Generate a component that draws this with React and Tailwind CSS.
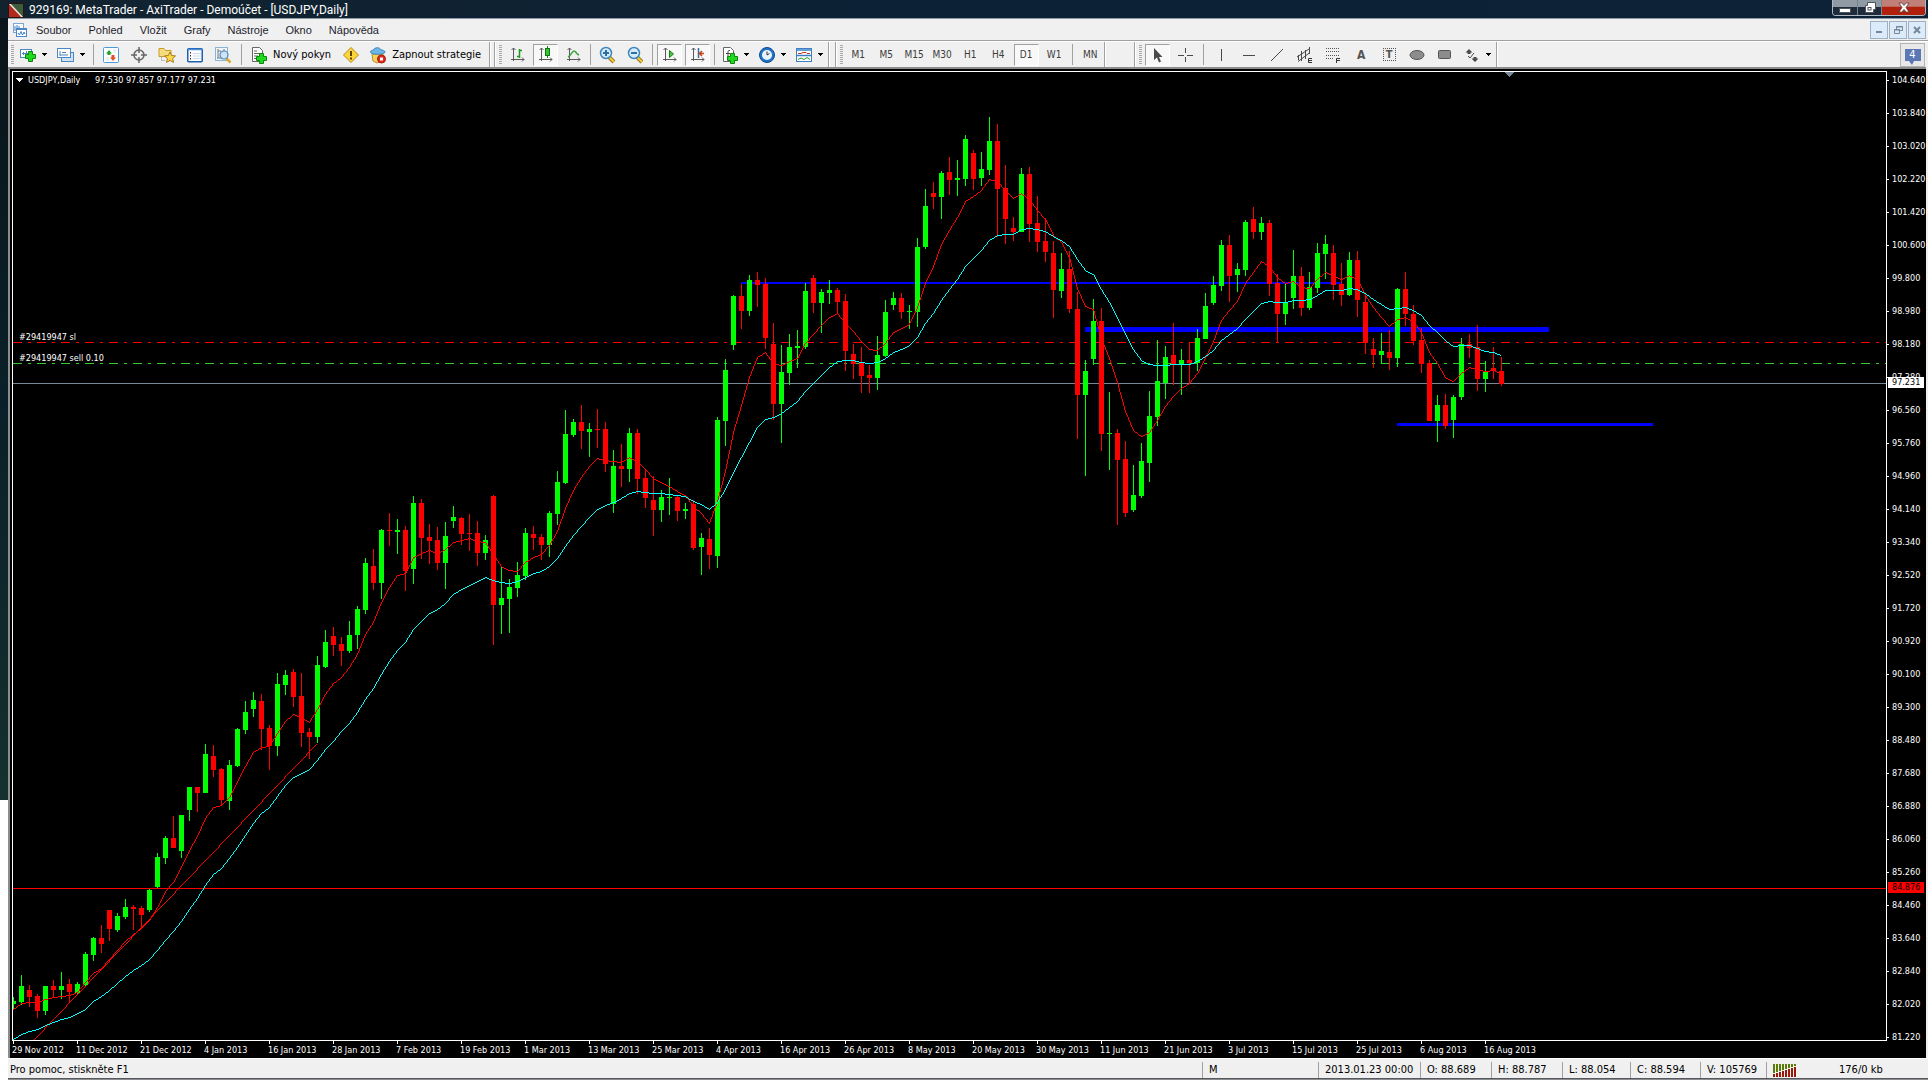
import React, { useState } from 'react';

// first bar column and plot origin, in window rows
const BAR_STEP = 8;
const PLOT_LEFT = 13;
const PLOT_TOP = 72;

// [high, body top, body bottom, low, up]
const candles = [
  [997, 1001, 1004, 1010, 1], [975, 986, 1002, 1005, 1], [985, 990, 997, 1007, 0], [994, 996, 1011, 1018, 0],
  [986, 986, 1011, 1015, 1], [980, 986, 990, 997, 0], [972, 986, 990, 999, 1], [979, 984, 992, 1002, 0],
  [982, 984, 993, 994, 1], [952, 954, 985, 986, 1], [937, 938, 955, 961, 1], [925, 938, 944, 953, 0],
  [910, 910, 929, 941, 0], [913, 916, 930, 932, 1], [899, 907, 917, 919, 1], [905, 907, 909, 930, 0],
  [906, 908, 915, 929, 0], [889, 890, 910, 912, 1], [853, 857, 887, 888, 1], [836, 838, 858, 864, 1],
  [816, 838, 848, 848, 0], [815, 815, 851, 858, 1], [787, 787, 810, 821, 1], [787, 787, 793, 812, 0],
  [744, 754, 793, 793, 1], [745, 756, 770, 777, 0], [768, 769, 800, 805, 0], [760, 765, 801, 810, 1],
  [728, 729, 766, 767, 1], [701, 712, 730, 734, 1], [692, 700, 709, 717, 1], [694, 701, 729, 750, 0],
  [725, 728, 746, 770, 0], [673, 684, 746, 756, 1], [670, 675, 685, 695, 1], [669, 672, 697, 707, 0],
  [673, 696, 733, 747, 0], [728, 732, 737, 759, 0], [656, 665, 737, 743, 1], [630, 642, 667, 668, 1],
  [627, 636, 645, 656, 0], [637, 644, 651, 666, 0], [621, 635, 651, 653, 1], [606, 609, 635, 649, 1],
  [558, 563, 610, 614, 1], [549, 566, 583, 590, 0], [529, 530, 583, 599, 1], [513, 530, 531, 546, 0],
  [519, 530, 532, 554, 1], [526, 530, 571, 591, 0], [496, 503, 569, 584, 1], [499, 503, 538, 559, 0],
  [524, 537, 541, 564, 0], [527, 540, 563, 570, 0], [522, 536, 563, 589, 1], [506, 517, 521, 528, 1],
  [517, 518, 534, 545, 0], [514, 533, 534, 551, 0], [521, 533, 553, 566, 0], [535, 540, 553, 560, 1],
  [495, 496, 605, 645, 0], [566, 598, 605, 634, 1], [579, 587, 599, 633, 1], [562, 575, 588, 597, 1],
  [528, 533, 576, 580, 1], [526, 534, 538, 550, 0], [534, 537, 545, 560, 0], [511, 513, 545, 557, 1],
  [471, 482, 514, 525, 1], [410, 434, 483, 484, 1], [419, 422, 435, 437, 1], [405, 422, 431, 449, 0],
  [423, 429, 432, 457, 1], [409, 429, 430, 448, 0], [422, 429, 464, 472, 0], [450, 466, 504, 513, 1],
  [444, 466, 469, 487, 0], [428, 433, 469, 482, 1], [429, 433, 479, 494, 0], [469, 478, 498, 508, 0],
  [476, 500, 510, 536, 0], [490, 497, 510, 522, 1], [478, 497, 498, 515, 1], [496, 497, 511, 521, 0],
  [503, 509, 511, 519, 1], [500, 504, 548, 550, 0], [533, 538, 547, 575, 1], [528, 539, 555, 569, 0],
  [417, 420, 556, 568, 1], [359, 370, 421, 446, 1], [295, 296, 345, 350, 1], [284, 296, 311, 329, 0],
  [275, 280, 311, 316, 1], [272, 280, 285, 307, 0], [278, 284, 338, 349, 0], [323, 344, 404, 420, 0],
  [345, 372, 404, 443, 1], [334, 347, 373, 385, 1], [330, 346, 348, 368, 1], [283, 291, 347, 349, 1],
  [275, 278, 303, 313, 0], [289, 292, 303, 333, 1], [280, 290, 293, 304, 1], [288, 290, 302, 314, 0],
  [294, 301, 351, 371, 0], [344, 354, 364, 379, 0], [347, 363, 376, 393, 0], [365, 375, 378, 393, 0],
  [336, 355, 378, 390, 1], [300, 312, 356, 357, 1], [292, 298, 305, 310, 1], [293, 298, 312, 319, 0],
  [305, 311, 312, 329, 1], [238, 247, 312, 327, 1], [189, 206, 247, 249, 1], [182, 193, 197, 209, 0],
  [171, 173, 197, 219, 1], [157, 172, 180, 195, 0], [160, 178, 180, 196, 1], [135, 139, 179, 186, 1],
  [150, 153, 179, 190, 0], [152, 169, 178, 186, 1], [117, 141, 170, 175, 1], [124, 141, 189, 237, 0],
  [165, 188, 219, 244, 0], [217, 228, 232, 241, 0], [168, 174, 232, 232, 1], [167, 174, 224, 242, 0],
  [196, 223, 242, 252, 0], [218, 241, 252, 262, 0], [241, 253, 290, 318, 0], [253, 269, 291, 298, 1],
  [251, 269, 309, 313, 0], [292, 309, 395, 439, 0], [360, 371, 395, 476, 1], [299, 321, 359, 365, 1],
  [308, 321, 434, 451, 0], [392, 433, 434, 470, 1], [429, 433, 460, 525, 0], [441, 459, 513, 517, 0],
  [465, 495, 510, 512, 1], [443, 461, 496, 498, 1], [391, 416, 463, 482, 1], [340, 381, 417, 426, 1],
  [346, 357, 383, 399, 1], [323, 355, 365, 385, 0], [349, 360, 365, 395, 1], [342, 360, 363, 383, 0],
  [329, 338, 363, 371, 1], [293, 306, 339, 339, 1], [276, 285, 303, 305, 1], [240, 245, 286, 291, 1],
  [235, 245, 276, 302, 0], [263, 269, 275, 292, 1], [220, 222, 270, 276, 1], [207, 219, 232, 239, 0],
  [217, 223, 232, 240, 1], [220, 223, 284, 296, 0], [274, 283, 314, 342, 0], [283, 303, 314, 325, 1],
  [250, 276, 298, 309, 1], [267, 276, 308, 316, 0], [272, 287, 308, 310, 1], [243, 253, 288, 293, 1],
  [235, 244, 254, 279, 1], [245, 253, 285, 300, 0], [263, 284, 295, 306, 0], [252, 260, 295, 296, 1],
  [251, 260, 300, 317, 0], [294, 302, 343, 354, 0], [338, 349, 355, 368, 0], [333, 351, 355, 364, 1],
  [330, 352, 358, 370, 0], [288, 289, 358, 367, 1], [272, 289, 314, 326, 0], [305, 314, 341, 345, 0],
  [328, 340, 364, 373, 0], [360, 363, 421, 421, 0], [395, 405, 421, 442, 1], [394, 405, 426, 429, 0],
  [395, 397, 420, 438, 1], [338, 344, 397, 400, 1], [334, 344, 348, 358, 0], [325, 347, 379, 391, 0],
  [361, 371, 379, 392, 1], [347, 368, 371, 379, 0], [357, 371, 384, 386, 0],
];

const fastMa = [
  1009, 1003, 1002, 1002, 999, 997, 996, 995, 992, 982, 973, 968, 959, 950, 941, 934, 928, 920, 907, 891, 882, 867, 850, 836,
  818, 807, 805, 797, 781, 766, 752, 747, 746, 733, 721, 714, 717, 722, 709, 694, 683, 677, 667, 654, 634, 622, 602, 587,
  575, 573, 557, 553, 550, 553, 549, 542, 540, 538, 541, 542, 554, 566, 570, 571, 562, 557, 554, 545, 531, 508, 490, 477,
  466, 458, 460, 461, 462, 457, 461, 469, 478, 482, 486, 491, 495, 506, 513, 523, 501, 471, 432, 405, 377, 357, 352, 363,
  365, 361, 358, 343, 334, 325, 317, 313, 323, 331, 341, 349, 350, 343, 332, 328, 324, 307, 283, 266, 244, 230, 217, 201,
  196, 190, 179, 181, 190, 198, 193, 199, 210, 219, 235, 242, 257, 288, 306, 309, 338, 358, 382, 411, 430, 436, 432, 420,
  406, 396, 388, 383, 373, 357, 341, 320, 310, 301, 283, 272, 261, 266, 277, 283, 281, 287, 288, 279, 272, 275, 279, 275,
  279, 295, 307, 317, 326, 319, 317, 321, 332, 352, 363, 377, 381, 373, 367, 369, 371, 370, 373,
];

const slowMa = [
  1039, 1034, 1031, 1029, 1025, 1022, 1019, 1017, 1013, 1009, 1001, 996, 990, 983, 976, 970, 965, 959, 950, 940, 931, 921, 909, 898,
  885, 874, 868, 858, 847, 835, 823, 813, 807, 796, 785, 777, 773, 769, 760, 749, 741, 731, 723, 712, 699, 688, 674, 661,
  650, 642, 629, 621, 613, 609, 603, 594, 589, 585, 581, 577, 580, 582, 583, 581, 577, 573, 571, 566, 558, 546, 535, 526,
  517, 509, 505, 502, 498, 493, 491, 492, 493, 493, 494, 495, 496, 501, 504, 509, 502, 489, 472, 457, 442, 427, 419, 417,
  413, 407, 401, 391, 383, 375, 367, 361, 360, 360, 362, 363, 362, 358, 352, 349, 345, 337, 323, 313, 300, 289, 279, 266,
  258, 250, 240, 235, 234, 234, 229, 228, 229, 231, 236, 240, 246, 259, 270, 274, 289, 302, 317, 334, 349, 360, 364, 365,
  365, 364, 364, 364, 361, 356, 350, 340, 334, 328, 319, 311, 303, 301, 302, 302, 300, 300, 299, 295, 290, 290, 290, 288,
  289, 293, 299, 304, 309, 308, 307, 310, 315, 325, 332, 340, 346, 345, 345, 348, 351, 352, 355,
];

const prices = [
  '104.640', '103.840', '103.020', '102.220', '101.420', '100.600', '99.800', '98.980', '98.180', '97.380',
  '96.560', '95.760', '94.960', '94.140', '93.340', '92.520', '91.720', '90.920', '90.100', '89.300',
  '88.480', '87.680', '86.880', '86.060', '85.260', '84.460', '83.640', '82.840', '82.020', '81.220',
];

const dates = [
  '29 Nov 2012', '11 Dec 2012', '21 Dec 2012', '4 Jan 2013', '16 Jan 2013', '28 Jan 2013', '7 Feb 2013', '19 Feb 2013',
  '1 Mar 2013', '13 Mar 2013', '25 Mar 2013', '4 Apr 2013', '16 Apr 2013', '26 Apr 2013', '8 May 2013', '20 May 2013',
  '30 May 2013', '11 Jun 2013', '21 Jun 2013', '3 Jul 2013', '15 Jul 2013', '25 Jul 2013', '6 Aug 2013', '16 Aug 2013',
];

const menus = ['Soubor', 'Pohled', 'Vložit', 'Grafy', 'Nástroje', 'Okno', 'Nápověda'];
const periods = ['M1', 'M5', 'M15', 'M30', 'H1', 'H4', 'D1', 'W1'];

const toPoints = (rows) => rows.map((y, i) => [PLOT_LEFT + i * BAR_STEP, y]);

// one square per step along the longer side, so a line stays one pixel thin
const pixelPath = (points) => {
  let d = '';
  for (let i = 1; i < points.length; i++) {
    const [x0, y0] = points[i - 1];
    const [x1, y1] = points[i];
    const steps = Math.max(Math.abs(x1 - x0), Math.abs(y1 - y0));
    for (let s = 0; s < steps; s++) {
      const x = Math.round(x0 + ((x1 - x0) * s) / steps);
      const y = Math.round(y0 + ((y1 - y0) * s) / steps);
      d += `M${x} ${y}h1v1h-1z`;
    }
  }
  return d;
};

const Icon = ({ children, w = 16 }) => (
  <svg width={w} height="18" viewBox={`0 0 ${w} 18`} fill="none" className="block shrink-0" aria-hidden="true">
    {children}
  </svg>
);

const Grip = () => (
  <div className="w-[3px] h-5 mx-px shrink-0 bg-[repeating-linear-gradient(to_bottom,#a8a8a8_0_1px,#f0f0f0_1px_2px)]"></div>
);
const Sep = ({ wide }) => (
  <div className={`${wide ? 'w-2' : 'w-[6px]'} shrink-0 flex justify-center`}>
    <div className="w-px h-[21px] bg-[#a0a0a0]"></div>
  </div>
);
const Seam = () => <div className="w-0.5 h-full shrink-0 bg-[#a0a0a0] border-r border-white"></div>;

const Tool = ({ label, pressed, children }) => (
  <button type="button" aria-label={label} aria-pressed={pressed} className="w-7 h-full shrink-0 flex items-center justify-center">
    <span
      className={`w-[25px] h-[22px] flex items-center justify-center border ${
        pressed ? 'bg-[#f8f8f8] border-t-[#a0a0a0] border-l-[#a0a0a0] border-b-white border-r-white' : 'border-transparent'
      }`}
    >
      {children}
    </span>
  </button>
);

const Arrow = () => (
  <svg width="5" height="3" viewBox="0 0 5 3" className="block shrink-0" shapeRendering="crispEdges">
    <path d="M0 0h5v1h-1v1h-1v1h-1v-1h-1v-1h-1z" fill="#000" />
  </svg>
);

const DropTool = ({ label, children }) => (
  <button type="button" aria-label={label} className="w-[37px] h-full shrink-0 flex items-center gap-[6px] pl-[5px]">
    {children}
    <Arrow />
  </button>
);

const Plus = ({ x, y }) => (
  <path
    transform={`translate(${x} ${y})`}
    d="M3.5.5h4v3h3v4h-3v3h-4v-3h-3v-4h3z"
    fill="#1fd81f"
    stroke="#0a8a0a"
  />
);

const Axes = ({ children }) => (
  <Icon>
    <path d="M4.500 2v13M2 13.500h13M2.500 4l2-2 2 2M13 11.500l2 2-2 2" stroke="#5a5a5a" />
    {children}
  </Icon>
);

const Magnifier = ({ plus }) => (
  <Icon>
    <path d="M10 11l5 5" stroke="#9a7410" strokeWidth="4" />
    <path d="M10 11l5 5" stroke="#f2cb4a" strokeWidth="2" />
    <circle cx="7" cy="7" r="5.500" fill="#d3ebfb" stroke="#3f86bd" strokeWidth="1.500" />
    <path d={plus ? 'M4 7h6M7 4v6' : 'M4 7h6'} stroke="#2f6f9f" strokeWidth="2" />
  </Icon>
);

const TitleBar = () => (
  <header className="h-[18px] shrink-0 flex items-start justify-between pl-2 pr-0.5 bg-linear-to-r from-[#12232f] via-[#0c2136] to-[#0d2237]">
    <div className="flex items-center h-[18px] pt-0.5 gap-[5px]">
      <svg width="16" height="15" viewBox="0 0 16 15" aria-hidden="true">
        <rect width="16" height="15" fill="#3d5c3c" />
        <path d="M0 0v15h15z" fill="#b02a1e" />
        <path d="M1 0l14 15" stroke="#f3e5df" strokeWidth="1.500" />
        <rect x=".5" y=".5" width="15" height="14" fill="none" stroke="#2a1512" />
      </svg>
      <h1 className="text-[12px] leading-4 text-white font-['Roboto',sans-serif] whitespace-nowrap">
        929169: MetaTrader - AxiTrader - Demoúčet - [USDJPY,Daily]
      </h1>
    </div>
    <div className="flex h-4 border border-t-0 border-[#aeb9c4] rounded-b-[4px] overflow-hidden">
      <button type="button" aria-label="Minimize" className="w-[25px] flex items-center justify-center bg-linear-to-b from-[#8f9aa5] from-45% to-[#1d2b3a] to-50% border-r border-[#77838f]">
        <svg width="12" height="12" viewBox="0 0 12 12"><rect x=".5" y="6.500" width="11" height="4" fill="#fff" stroke="#4b535c" /></svg>
      </button>
      <button type="button" aria-label="Restore" className="w-6 flex items-center justify-center bg-linear-to-b from-[#8f9aa5] from-45% to-[#1d2b3a] to-50% border-r border-[#77838f]">
        <svg width="12" height="13" viewBox="0 0 12 13">
          <path d="M3.500 1.500h8v7h-2v3h-8v-7h2z" fill="#fff" stroke="#4b535c" />
          <rect x="4" y="6.500" width="3" height="2.500" fill="#fff" stroke="#4b535c" />
        </svg>
      </button>
      <button type="button" aria-label="Close" className="w-[43px] flex items-center justify-center bg-linear-to-b from-[#c08078] from-40% to-[#b0200c] to-50%">
        <svg width="12" height="11" viewBox="0 0 12 11">
          <path d="M1 1h3l2 2.500L8 1h3L8 5.500 11 10H8L6 7.500 4 10H1l3-4.500z" fill="#fff" stroke="#5b3a3a" strokeWidth=".8" />
        </svg>
      </button>
    </div>
  </header>
);

const MenuBar = () => (
  <nav className="h-[21px] shrink-0 flex items-center justify-between pl-[5px] pr-0.5 bg-[#f0f0f0] border-b border-[#a0a0a0] text-[11px] leading-4 text-[#1c1c2c] font-['Liberation_Sans',sans-serif]">
    <div className="flex items-center gap-px">
      <svg width="14" height="16" viewBox="0 0 14 16" fill="none" aria-hidden="true">
        <rect x=".5" y="1.500" width="10" height="9" fill="#fff" stroke="#7aa7d8" />
        <path d="M2 4v5M4 3v5M6 4v4" stroke="#3f7dc4" />
        <rect x="3.500" y="6.500" width="10" height="8" fill="#fff" stroke="#4b86c8" />
        <path d="M3.500 7.500h10" stroke="#4b86c8" />
        <path d="M5 11l1.500 2L8 9.500l1.500 3.500L11 10l1 2" stroke="#3f7dc4" />
      </svg>
      {menus.map((name) => (
        <button key={name} type="button" className="px-2">{name}</button>
      ))}
    </div>
    <div className="flex gap-px">
      <button type="button" aria-label="Minimize chart" className="w-[18px] h-[18px] flex items-center justify-center bg-[#dcebfa] border border-[#9db0c4]">
        <svg width="8" height="8"><rect x="1" y="5" width="6" height="2" fill="#76879a" /></svg>
      </button>
      <button type="button" aria-label="Restore chart" className="w-[18px] h-[18px] flex items-center justify-center bg-[#dcebfa] border border-[#9db0c4]">
        <svg width="9" height="8" fill="none" stroke="#76879a"><path d="M2.500 3V.5h6v4H6M2 1h7" /><path d="M.5 3.500h5v4h-5zM0 4h6" /></svg>
      </button>
      <button type="button" aria-label="Close chart" className="w-[18px] h-[18px] flex items-center justify-center bg-[#dcebfa] border border-[#9db0c4]">
        <svg width="8" height="8" stroke="#76879a" strokeWidth="2"><path d="M1 1l6 6M7 1l-6 6" /></svg>
      </button>
    </div>
  </nav>
);

const Toolbar = ({ period, setPeriod }) => (
  <div className="h-[26px] shrink-0 flex items-center pl-0.5 bg-[#f0f0f0] border-t border-white text-[11px] leading-4 text-black">
    <Grip />
    <DropTool label="New chart">
      <Icon>
        <rect x=".5" y="3.500" width="11" height="8" fill="#fff" stroke="#4c87bd" />
        <path d="M2 7.500h7M3.500 6v3M6.500 5v4" stroke="#4c87bd" />
        <Plus x="5" y="5" />
      </Icon>
    </DropTool>
    <DropTool label="Profiles">
      <Icon w="17">
        <rect x="4.500" y="6.500" width="12" height="9" fill="#cfe2f4" stroke="#4c87bd" />
        <rect x=".5" y="2.500" width="13" height="9" fill="#fff" stroke="#4c87bd" />
        <path d="M3 5v5M5 6.500h4M3 9h8" stroke="#4c87bd" />
      </Icon>
    </DropTool>
    <Sep wide />
    <Tool label="Market watch">
      <Icon>
        <rect x=".5" y="1.500" width="15" height="15" rx="1" fill="#fff" stroke="#4c9ade" />
        <path d="M3 7.500L6 4l3 3.500H7.500V9h-3V7.500z" fill="#2aa52a" />
        <path d="M7 11.500l3 3.500 3-3.500h-1.500V9h-3v2.500z" fill="#e0532a" />
        <path d="M10 4h4M10 6h3M3 12h3M3 14h3" stroke="#d5e3f0" />
      </Icon>
    </Tool>
    <Tool label="Data window">
      <Icon>
        <circle cx="8" cy="9" r="5" stroke="#666" strokeWidth="1.500" />
        <path d="M8 1v6M8 11v6M0 9h6M10 9h6" stroke="#666" strokeWidth="1.500" />
      </Icon>
    </Tool>
    <Tool label="Navigator">
      <Icon w="18">
        <path d="M1 2.500h5L7.500 4.500H13v6H1z" fill="#f7dc7e" stroke="#c79b2c" />
        <path d="M3.500 10.500v4h4" stroke="#8a8a8a" strokeDasharray="1 1" />
        <path d="M12 6l1.600 3.500 3.900.4-2.900 2.600.9 3.900L12 14.400l-3.500 2 .9-3.900-2.900-2.600 3.900-.4z" fill="#ffd84a" stroke="#a87a18" />
      </Icon>
    </Tool>
    <Tool label="Terminal">
      <Icon>
        <rect x=".75" y="2.750" width="14.500" height="13" rx="1" fill="#fff" stroke="#1d5fae" strokeWidth="1.500" />
        <path d="M1 3.500h14" stroke="#4f8fd6" strokeWidth="1.500" />
        <path d="M3.500 6v9" stroke="#333" strokeDasharray="1.500 1.500" />
        <path d="M6 7.500h8M6 10h8M6 12.500h8" stroke="#c9d9ea" />
      </Icon>
    </Tool>
    <Tool label="Strategy tester">
      <Icon w="17">
        <rect x=".5" y="1.500" width="12" height="13" fill="#eef5fb" stroke="#88b4d8" />
        <path d="M3 3v9M3 5h3M9 3v4M2 12h8" stroke="#777" />
        <path d="M11 12l4.500 4.500" stroke="#d9a92c" strokeWidth="2.500" />
        <circle cx="9" cy="9" r="4" fill="#cfe5f6" stroke="#4c87bd" strokeWidth="1.200" />
      </Icon>
    </Tool>
    <Sep wide />
    <button type="button" className="h-full shrink-0 flex items-center gap-[6px] px-[6px] whitespace-nowrap">
      <Icon>
        <path d="M1.500 1.500h7l3 3v11h-10z" fill="#fff" stroke="#666" />
        <path d="M3 5h3M3 7.500h6M3 10h4M3 12.500h3" stroke="#666" />
        <Plus x="5" y="7" />
      </Icon>
      Nový pokyn
    </button>
    <Tool label="MetaEditor">
      <Icon>
        <path d="M8 1.500L15.500 9 8 16.500.5 9z" fill="#fbd53a" stroke="#b5891a" />
        <path d="M8 5v5M8 11.500v2" stroke="#5b4300" strokeWidth="2" />
      </Icon>
    </Tool>
    <button type="button" className="h-full shrink-0 flex items-center gap-[6px] pl-[5px] pr-2 whitespace-nowrap">
      <Icon>
        <path d="M2 8h11l-1 7-5 2-4-2z" fill="#f4d35c" stroke="#b9912b" />
        <path d="M.5 6c0-1.500 2-1.800 3-2C4.500 1 10 1 11 4c1.500 0 4 .6 4 2 0 3-14.500 3-14.500 0z" fill="#6db6e6" stroke="#3c86b8" />
        <circle cx="11.500" cy="13" r="4" fill="#df2a1a" stroke="#a81a0e" />
        <rect x="10" y="11.500" width="3" height="3" fill="#fff" />
      </Icon>
      Zapnout strategie
    </button>
    <Seam />
    <div className="w-[3px]"></div>
    <Seam />
    <div className="w-0.5"></div>
    <Grip />
    <Tool label="Bar chart">
      <Axes><path d="M10.500 3v9M8 10.500h2.500M10.500 4.500H13" stroke="#1d9a1d" strokeWidth="1.500" /></Axes>
    </Tool>
    <Tool label="Candlesticks" pressed>
      <Axes>
        <path d="M10.500 0v12" stroke="#0f7a0f" />
        <rect x="8.500" y="2.500" width="4" height="7" fill="#35c335" stroke="#0f7a0f" />
      </Axes>
    </Tool>
    <Tool label="Line chart">
      <Axes><path d="M3 11c3-1 4-6 6-6s2 3 5 4" stroke="#3aa53a" strokeWidth="1.500" /></Axes>
    </Tool>
    <Sep />
    <Tool label="Zoom in"><Magnifier plus /></Tool>
    <Tool label="Zoom out"><Magnifier /></Tool>
    <Sep />
    <Tool label="Auto scroll" pressed>
      <Axes><path d="M8.500 4.500l4 3.500-4 3.500z" fill="#4cc44c" stroke="#138013" /></Axes>
    </Tool>
    <Tool label="Chart shift" pressed>
      <Axes>
        <path d="M9.500 2v10" stroke="#2c6f9f" strokeWidth="1.500" />
        <path d="M15 7.500h-4M13 5l-2.500 2.500L13 10" stroke="#c8401a" strokeWidth="1.500" />
      </Axes>
    </Tool>
    <Sep />
    <DropTool label="Indicators">
      <Icon>
        <path d="M1.500 1.500h7l3 3v11h-10z" fill="#fff" stroke="#666" />
        <path d="M8 4.500c-2-.5-2 1-2 2V12M4 7.500h4" stroke="#444" />
        <Plus x="5" y="7" />
      </Icon>
    </DropTool>
    <DropTool label="Periods">
      <Icon>
        <circle cx="8" cy="9" r="7.500" fill="#1f74c8" stroke="#10498c" />
        <circle cx="8" cy="9" r="5" fill="#e8f4fd" />
        <path d="M8 5.500V9l2.500-1.500" stroke="#333" />
      </Icon>
    </DropTool>
    <DropTool label="Templates">
      <Icon>
        <rect x=".5" y="2.500" width="15" height="13" fill="#fff" stroke="#3b7fc4" />
        <path d="M1 4h14M1 9.500h14" stroke="#3b7fc4" strokeWidth="1.500" />
        <path d="M2 7.500h3l2-1h3l1 1h3" stroke="#c23a1a" />
        <path d="M2 13.500l3-1.500 3 1.500 3-2 3 2" stroke="#2c9a2c" />
      </Icon>
    </DropTool>
    <Seam />
    <div className="w-[5px]"></div>
    <Seam />
    <div className="w-0.5"></div>
    <Grip />
    {periods.map((p) => (
      <button key={p} type="button" aria-pressed={p === period} onClick={() => setPeriod(p)} className="w-7 h-full shrink-0 flex items-center justify-center">
        <span
          className={`w-[25px] h-[22px] flex items-center justify-center border text-[10px] leading-4 text-[#3c3c3c] ${
            p === period ? 'bg-[#f8f8f8] border-t-[#a0a0a0] border-l-[#a0a0a0] border-b-white border-r-white' : 'border-transparent'
          }`}
        >
          {p}
        </span>
      </button>
    ))}
    <Sep wide />
    <button type="button" onClick={() => setPeriod('MN')} className="w-7 h-full shrink-0 text-[10px] leading-4 text-[#3c3c3c]">MN</button>
    <Seam />
    <div className="w-7"></div>
    <Seam />
    <div className="w-0.5"></div>
    <Grip />
    <Tool label="Cursor" pressed>
      <Icon><path d="M5 2v12l3-2.500 2 5 2-1-2-4.500h3.500z" fill="#4a4a4a" /></Icon>
    </Tool>
    <Tool label="Crosshair">
      <Icon><path d="M8.500 2v5M8.500 11v5M1 9.500h6M10 9.500h6" stroke="#4a4a4a" /></Icon>
    </Tool>
    <Sep wide />
    <Tool label="Vertical line"><Icon><path d="M8.500 3v12" stroke="#4a4a4a" /></Icon></Tool>
    <Tool label="Horizontal line"><Icon><path d="M2 9.500h12" stroke="#4a4a4a" /></Icon></Tool>
    <Tool label="Trendline"><Icon><path d="M2 15L14 3" stroke="#4a4a4a" /></Icon></Tool>
    <Tool label="Equidistant channel">
      <Icon>
        <path d="M0 11L12 3M1 15.500l12-9M4.500 5v10M8.500 4v9M12.500 1v7M1.500 9v5" stroke="#4a4a4a" />
        <path d="M15 12.500h-3.500v4H15M11.500 14.500H15" stroke="#333" />
      </Icon>
    </Tool>
    <Tool label="Fibonacci retracement">
      <Icon>
        <path d="M1 2.500h13M1 5.500h13M1 9.500h13M1 12.500h8" stroke="#555" strokeDasharray="1 1" />
        <path d="M15 12.500h-3.500V17M11.500 14.500H15" stroke="#333" />
      </Icon>
    </Tool>
    <Tool label="Text"><span className="text-[12px] leading-4 font-bold text-[#555]">A</span></Tool>
    <Tool label="Text label">
      <span className="w-[13px] h-[13px] border border-dotted border-[#555] flex items-center justify-center text-[11px] leading-3 font-bold text-[#555]">T</span>
    </Tool>
    <Tool label="Ellipse"><Icon><ellipse cx="8" cy="9" rx="7" ry="4.500" fill="#8c8c8c" stroke="#555" /></Icon></Tool>
    <Tool label="Rectangle"><Icon><rect x="1.500" y="4.500" width="12" height="8" rx="1" fill="#8c8c8c" stroke="#555" /></Icon></Tool>
    <DropTool label="Arrows">
      <Icon>
        <path d="M5 3l3.500 3.500H6.500V8h-3V6.500h-2z M11 16l-3.500-3.500h2V11h3v1.500h2z" fill="#4a4a4a" />
        <path d="M4 10l2 2 4-5" stroke="#4a4a4a" />
      </Icon>
    </DropTool>
    <Seam />
    <button type="button" aria-label="Messages" className="ml-auto mr-[3px] w-[25px] h-6 shrink-0 border border-[#b4b4b4] bg-[#e8e8e8] flex items-center justify-center">
      <span className="relative w-4 h-3 bg-[#5b78b4] text-white text-[11px] leading-3 text-center">
        4
        <svg width="5" height="4" className="absolute left-1 top-3"><path d="M0 0h5L3 4z" fill="#5b78b4" /></svg>
      </span>
    </button>
  </div>
);

const Plot = () => (
  <div className="relative flex-1 min-w-0 border border-white overflow-hidden">
    <svg width="100%" height="100%" className="block" shapeRendering="crispEdges" fill="none">
      <line x1="0" x2="100%" y1="270.500" y2="270.500" stroke="#ff0000" strokeDasharray="9 6 3 6" />
      <line x1="0" x2="100%" y1="291.500" y2="291.500" stroke="#32cd32" strokeDasharray="9 6 3 6" />
      <line x1="0" x2="100%" y1="311.500" y2="311.500" stroke="#778899" />
      <line x1="0" x2="100%" y1="816.500" y2="816.500" stroke="#ff0000" />
      <g transform={`translate(${-PLOT_LEFT} ${-PLOT_TOP})`}>
        <rect x="741" y="282" width="600" height="2" fill="#0000ff" />
        <rect x="1085" y="327" width="464" height="5" fill="#0000ff" />
        <rect x="1397" y="423" width="256" height="3" fill="#0000ff" />
        <path d={pixelPath([[33, 1040], [317, 743]])} fill="#ff0000" />
        {candles.map(([high, top, bottom, low, up], i) => {
          const x = PLOT_LEFT + i * BAR_STEP;
          return (
            <g key={i} fill={up ? '#00ff00' : '#ff0000'}>
              <rect x={x} y={high} width="1" height={low - high} />
              <rect x={x - 2} y={top} width="5" height={bottom - top} />
            </g>
          );
        })}
        <path d={pixelPath(toPoints(fastMa))} fill="#ff0000" />
        <path d={pixelPath(toPoints(slowMa))} fill="#00ffff" />
        <path d="M1505 72h9l-4.500 5z" fill="#778899" />
        <path d="M16 78h7l-3.500 4z" fill="#fff" />
      </g>
    </svg>
    <div className="absolute left-[15px] top-0.5 flex text-white whitespace-nowrap">
      <span className="w-[67px]">USDJPY,Daily</span>
      <span>97.530 97.857 97.177 97.231</span>
    </div>
    <span className="absolute left-[6px] top-[259px] text-white whitespace-nowrap">#29419947 sl</span>
    <span className="absolute left-[6px] top-[280px] text-white whitespace-nowrap">#29419947 sell 0.10</span>
  </div>
);

const Chart = () => (
  <main className="flex-1 min-h-0 flex flex-col bg-black border-t-2 border-l-2 border-[#8c8c8c] pt-0.5 pl-0.5 mr-0.5 text-[9px] leading-3 text-white overflow-hidden">
    <div className="flex-1 min-h-0 flex">
      <Plot />
      <div className="relative w-[39px] shrink-0 pt-[3px]">
        {prices.map((price) => (
          <div key={price} className="h-[33px] flex items-start">
            <span className="w-0.5 h-px mt-[6px] mr-[3px] bg-white"></span>
            {price}
          </div>
        ))}
        <span className="absolute left-px top-[306px] w-9 h-[11px] pl-1 leading-[11px] bg-white text-black">97.231</span>
        <span className="absolute left-px top-[811px] w-9 h-[11px] pl-1 leading-[11px] bg-[#ff0000] text-black">84.876</span>
      </div>
    </div>
    <div className="h-[17px] shrink-0 flex overflow-hidden">
      {dates.map((date) => (
        <div key={date} className="w-16 shrink-0 whitespace-nowrap">
          <div className="w-px h-[3px] ml-px bg-white"></div>
          {date}
        </div>
      ))}
    </div>
  </main>
);

const Cell = ({ className, children }) => (
  <div className={`h-4 shrink-0 pl-[6px] border-l border-[#a0a0a0] whitespace-nowrap ${className}`}>{children}</div>
);

const StatusBar = () => (
  <footer className="h-[21px] shrink-0 flex items-end pl-0.5 bg-[#f0f0f0] border-t border-white border-b border-b-[#55585c] text-[11px] leading-4 text-black">
    <span className="flex-1">Pro pomoc, stiskněte F1</span>
    <Cell className="w-[116px]">M</Cell>
    <Cell className="w-[102px]">2013.01.23 00:00</Cell>
    <Cell className="w-[71px]">O: 88.689</Cell>
    <Cell className="w-[71px]">H: 88.787</Cell>
    <Cell className="w-[68px]">L: 88.054</Cell>
    <Cell className="w-[70px]">C: 88.594</Cell>
    <Cell className="w-[66px]">V: 105769</Cell>
    <Cell className="w-[162px] flex items-center">
      <svg width="24" height="13" viewBox="0 0 24 13" shapeRendering="crispEdges" aria-hidden="true">
        {[0, 1, 2, 3, 4, 5, 6, 7].map((i) => (
          <g key={i}>
            <rect x={i * 3} y="0" width="2" height={9 - i} fill="#5a7a0a" />
            <rect x={i * 3} y={10 - i} width="2" height={3 + i} fill="#96190a" />
          </g>
        ))}
      </svg>
      <span className="ml-[42px]">176/0 kb</span>
    </Cell>
  </footer>
);

export default function App() {
  const [period, setPeriod] = useState('D1');

  return (
    <div className="h-screen flex flex-col overflow-hidden bg-[#8a8c90] font-['DejaVu_Sans_Condensed','DejaVu_Sans',sans-serif]">
      <TitleBar />
      <div className="flex-1 min-h-0 flex">
        <div className="w-2 shrink-0 flex flex-col bg-white">
          <div className="h-[782px] bg-linear-to-b from-[#0a151b] via-[#0a2028] to-[#15302f]"></div>
        </div>
        <div className="flex-1 min-w-0 flex flex-col bg-[#f0f0f0] border-t border-[#8d99a6] pt-px mb-px">
          <MenuBar />
          <Toolbar period={period} setPeriod={setPeriod} />
          <Chart />
          <StatusBar />
        </div>
      </div>
    </div>
  );
}
